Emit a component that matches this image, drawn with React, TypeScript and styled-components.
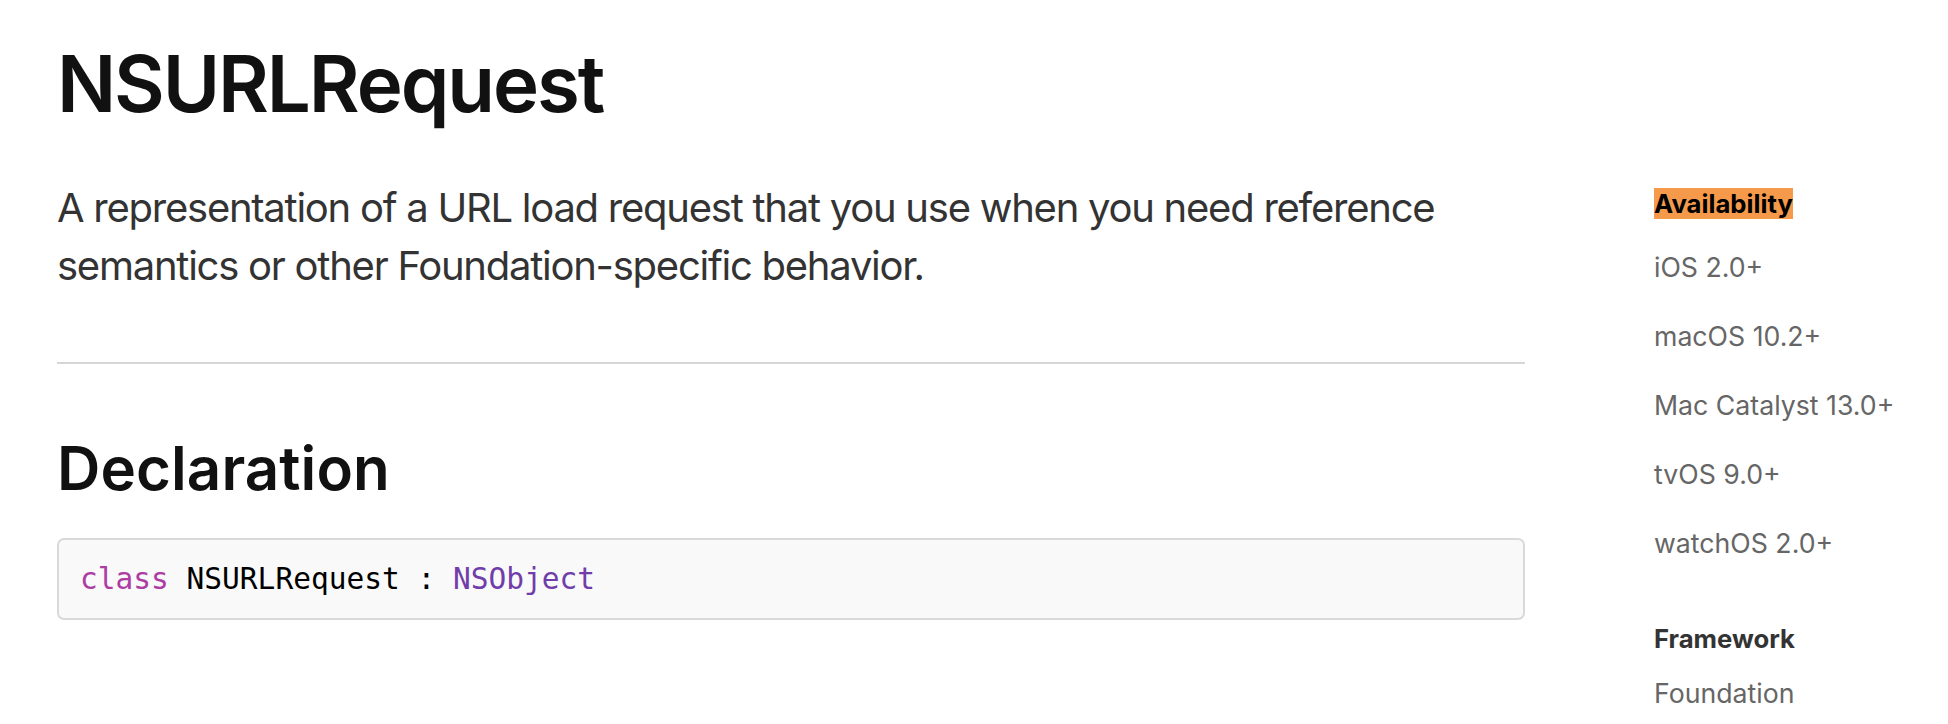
import React from "react";
import styled, { createGlobalStyle } from "styled-components";

const GlobalStyle = createGlobalStyle`
  html, body { margin: 0; padding: 0; background: #ffffff; }
  body { font-family: Inter, "Noto Sans", sans-serif; -webkit-font-smoothing: antialiased; }
`;

const Page = styled.div`
  display: flex;
  align-items: flex-start;
  gap: 129px;
  padding: 41px 0 0 57px;
`;

const Main = styled.main`
  width: 1468px;
  flex: none;
`;

const Title = styled.h1`
  margin: 0;
  font-size: 78px;
  line-height: 86px;
  font-weight: 600;
  color: #111111;
  letter-spacing: -2.1px;
`;

const Abstract = styled.p`
  margin: 52px 0 0;
  font-size: 40px;
  line-height: 58px;
  font-weight: 400;
  color: #333333;
  letter-spacing: -1.25px;
`;

const AbstractLine = styled.span`
  display: block;
  white-space: nowrap;
`;

const Rule = styled.hr`
  margin: 67px 0 0;
  border: none;
  border-top: 2px solid #d6d6d6;
  height: 0;
`;

const SectionTitle = styled.h2`
  margin: 71px 0 0;
  font-size: 60px;
  line-height: 66px;
  font-weight: 600;
  color: #111111;
  letter-spacing: 0.1px;
`;

const CodeBox = styled.pre`
  margin: 37px 0 0;
  padding: 20px 21px;
  background: #f9f9f9;
  border: 2px solid #d9d9d9;
  border-radius: 7px;
  font-family: "DejaVu Sans Mono", "Liberation Mono", monospace;
  font-size: 29.5px;
  line-height: 38px;
  color: #000000;
`;

const Token = styled.span<{ $kind: "keyword" | "type" | "plain" }>`
  color: ${(p) =>
    p.$kind === "keyword" ? "#ad3da4" : p.$kind === "type" ? "#703daa" : "#000000"};
`;

const Sidebar = styled.aside`
  display: flex;
  flex-direction: column;
  padding-top: 147px;
`;

const Heading = styled.div<{ $highlight?: boolean }>`
  font-size: 25.7px;
  line-height: 32px;
  font-weight: 700;
  color: ${(p) => (p.$highlight ? "#000000" : "#333333")};
  margin-top: ${(p) => (p.$highlight ? "0" : "64px")};
`;

const Mark = styled.span`
  background: #f5994a;
`;

const Item = styled.div<{ $first?: boolean; $tight?: boolean }>`
  font-size: 26.7px;
  line-height: 32px;
  color: #666666;
  margin-top: ${(p) => (p.$tight ? "22px" : p.$first ? "31px" : "37px")};
`;

const platforms = ["iOS 2.0+", "macOS 10.2+", "Mac Catalyst 13.0+", "tvOS 9.0+", "watchOS 2.0+"];

export default function App() {
  return (
    <>
      <GlobalStyle />
      <Page>
        <Main>
          <Title>NSURLRequest</Title>
          <Abstract>
            <AbstractLine>
              A representation of a URL load request that you use when you need reference
            </AbstractLine>
            <AbstractLine>semantics or other Foundation-specific behavior.</AbstractLine>
          </Abstract>
          <Rule />
          <SectionTitle>Declaration</SectionTitle>
          <CodeBox>
            <Token $kind="keyword">class</Token>
            <Token $kind="plain"> NSURLRequest : </Token>
            <Token $kind="type">NSObject</Token>
          </CodeBox>
        </Main>
        <Sidebar>
          <Heading $highlight>
            <Mark>Availability</Mark>
          </Heading>
          {platforms.map((p, i) => (
            <Item key={p} $first={i === 0}>
              {p}
            </Item>
          ))}
          <Heading>Framework</Heading>
          <Item $tight>Foundation</Item>
        </Sidebar>
      </Page>
    </>
  );
}
